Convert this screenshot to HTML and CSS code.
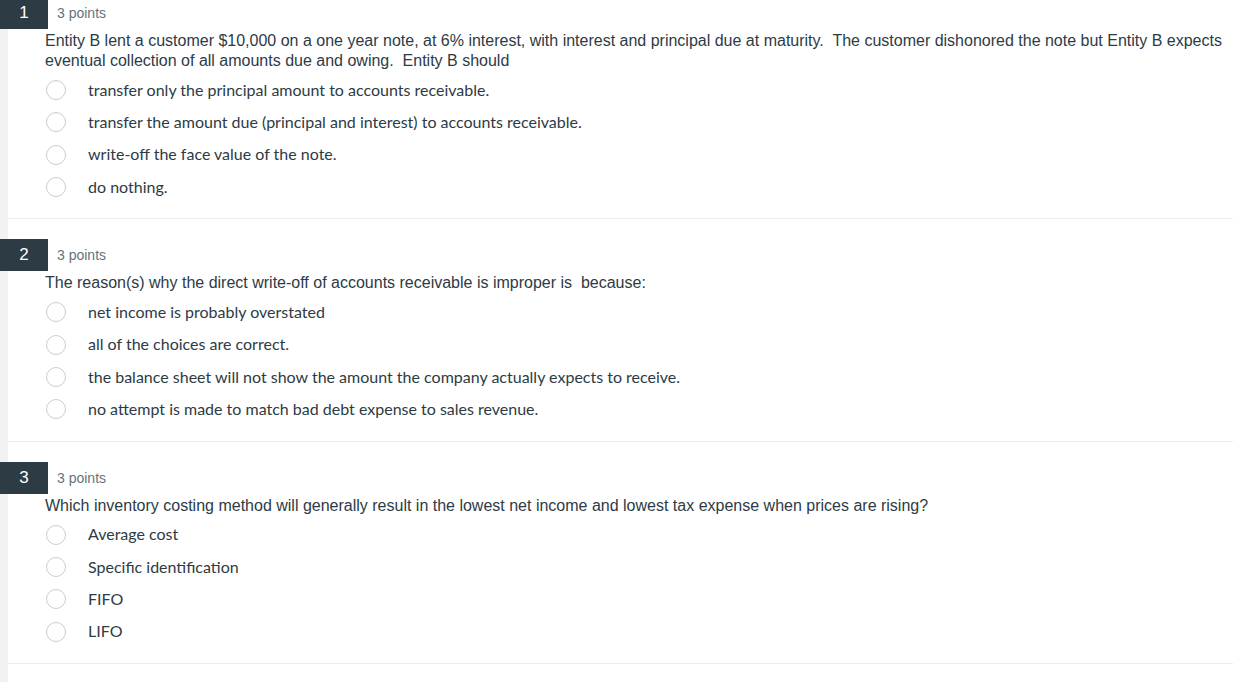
FILE: index.html
```html
<!DOCTYPE html>
<html>
<head>
<meta charset="utf-8">
<link rel="stylesheet" href="styles.css">
</head>
<body>
<div class="page">
  <div class="question">
    <div class="header"><span class="badge">1</span><span class="points">3 points</span></div>
    <div class="text">Entity B lent a customer $10,000 on a one year note, at 6% interest, with interest and principal due at maturity.&nbsp; The customer dishonored the note but Entity B expects eventual collection of all amounts due and owing.&nbsp; Entity B should</div>
    <ul class="options">
      <li class="option"><span class="radio"></span><span class="label">transfer only the principal amount to accounts receivable.</span></li>
      <li class="option"><span class="radio"></span><span class="label">transfer the amount due (principal and interest) to accounts receivable.</span></li>
      <li class="option"><span class="radio"></span><span class="label">write-off the face value of the note.</span></li>
      <li class="option"><span class="radio"></span><span class="label">do nothing.</span></li>
    </ul>
  </div>
  <div class="question">
    <div class="header"><span class="badge">2</span><span class="points">3 points</span></div>
    <div class="text">The reason(s) why the direct write-off of accounts receivable is improper is&nbsp; because:</div>
    <ul class="options">
      <li class="option"><span class="radio"></span><span class="label">net income is probably overstated</span></li>
      <li class="option"><span class="radio"></span><span class="label">all of the choices are correct.</span></li>
      <li class="option"><span class="radio"></span><span class="label">the balance sheet will not show the amount the company actually expects to receive.</span></li>
      <li class="option"><span class="radio"></span><span class="label">no attempt is made to match bad debt expense to sales revenue.</span></li>
    </ul>
  </div>
  <div class="question">
    <div class="header"><span class="badge">3</span><span class="points">3 points</span></div>
    <div class="text">Which inventory costing method will generally result in the lowest net income and lowest tax expense when prices are rising?</div>
    <ul class="options">
      <li class="option"><span class="radio"></span><span class="label">Average cost</span></li>
      <li class="option"><span class="radio"></span><span class="label">Specific identification</span></li>
      <li class="option"><span class="radio"></span><span class="label">FIFO</span></li>
      <li class="option"><span class="radio"></span><span class="label">LIFO</span></li>
    </ul>
  </div>
</div>
</body>
</html>
```
FILE: styles.css
```css
html, body {
  margin: 0;
  padding: 0;
  background: #ffffff;
}
body {
  overflow: hidden;
}
.page {
  border-left: 8px solid #f2f2f2;
  margin-top: -3px;
  min-height: 700px;
  box-sizing: border-box;
}
.question {
  padding-top: 20px;
  padding-bottom: 15px;
  border-bottom: 1px solid #ededed;
}
.question:first-child {
  padding-top: 0;
}
.header {
  display: flex;
  align-items: center;
  height: 32px;
  margin-left: -8px;
}
.badge {
  width: 48px;
  height: 32px;
  background: #2d3b45;
  color: #ffffff;
  font-family: "Liberation Sans", Arial, sans-serif;
  font-size: 17px;
  display: flex;
  align-items: center;
  justify-content: center;
}
.points {
  margin-left: 9px;
  font-family: "Liberation Sans", Arial, sans-serif;
  font-size: 14px;
  color: #68737b;
}
.text {
  margin-top: 2px;
  padding-left: 37px;
  padding-right: 8px;
  font-family: "Liberation Sans", Arial, sans-serif;
  font-size: 16px;
  line-height: 20px;
  color: #2d3b45;
}
.options {
  list-style: none;
  margin: 3px 0 0 0;
  padding: 0 0 0 38px;
}
.option {
  display: flex;
  align-items: center;
  height: 32.33px;
}
.radio {
  width: 18px;
  height: 18px;
  border: 1px solid #c7cdd1;
  border-radius: 50%;
  flex: none;
  background: #fff;
}
.label {
  margin-left: 22px;
  padding-bottom: 1px;
  font-family: Lato, "Liberation Sans", sans-serif;
  font-size: 16px;
  line-height: 20px;
  color: #2d3b45;
}
```
